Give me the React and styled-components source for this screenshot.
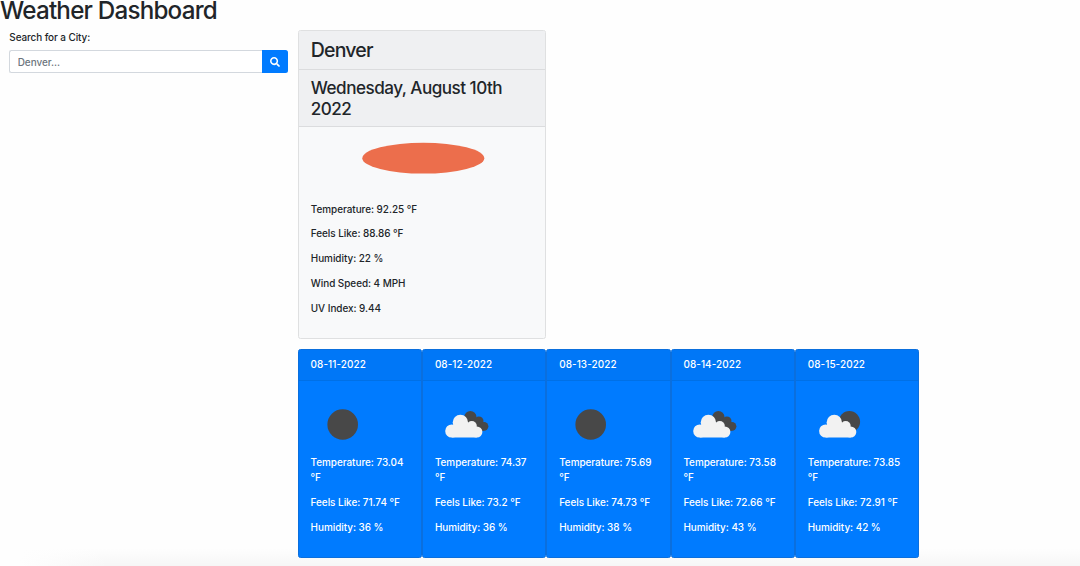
import React from "react";
import styled, { createGlobalStyle } from "styled-components";

const GlobalStyle = createGlobalStyle`
  *, *::before, *::after { box-sizing: border-box; }
  body {
    margin: 0;
    background: #fefefe;
    color: #212529;
    font-family: Inter, "Liberation Sans", sans-serif;
    font-size: 9.94px;
    font-weight: 450;
    line-height: 14.91px;
    overflow: hidden;
  }
`;

const Page = styled.div`
  position: relative;
  height: 566px;
`;

const Title = styled.h1`
  margin: 0;
  height: 29.8px;
  font-size: 24.2px;
  line-height: 21px;
  font-weight: 540;
  letter-spacing: -0.78px;
  white-space: nowrap;
`;

const Columns = styled.div`
  display: flex;
  align-items: flex-start;
`;

const SearchColumn = styled.form`
  width: 297.8px;
  padding: 0 9.7px 0 9.3px;
`;

const SearchLabel = styled.label`
  display: block;
  height: 20px;
  letter-spacing: -0.08px;
`;

const SearchGroup = styled.div`
  display: flex;
  height: 23.7px;
`;

const SearchInput = styled.input`
  flex: 1;
  min-width: 0;
  padding: 1px 7.4px 0;
  border: 1px solid #d3d8de;
  border-right: 0;
  border-radius: 2.5px 0 0 2.5px;
  background: #fff;
  font: inherit;
  outline: none;
  &::placeholder { color: #6c757d; opacity: 1; }
`;

const SearchButton = styled.button`
  display: flex;
  align-items: center;
  justify-content: center;
  width: 26.4px;
  padding: 0;
  border: 0;
  border-radius: 0 2.5px 2.5px 0;
  background: #007bff;
  color: #fff;
`;

const Results = styled.main`
  width: 621.4px;
`;

const CurrentCard = styled.section`
  width: 248.6px;
  height: 309.3px;
  margin-bottom: 9.9px;
  border: 1px solid #dfe0e1;
  border-radius: 2.5px;
  background: #f8f9fa;
  overflow: hidden;
`;

const CurrentHeader = styled.header`
  height: ${(p) => p.$height}px;
  padding: 8.2px 12px 0;
  border-bottom: 1px solid #dbdcde;
  background: #eff0f2;
`;

const City = styled.h2`
  margin: 0;
  font-size: 19.5px;
  line-height: 23.9px;
  font-weight: 540;
  letter-spacing: -0.82px;
`;

const Today = styled.h3`
  margin: 0;
  font-size: 17.1px;
  line-height: 20.9px;
  font-weight: 540;
  letter-spacing: -0.51px;
`;

const CurrentBody = styled.div`
  padding: 0 12px;
`;

const SunIcon = styled.svg`
  display: block;
  width: 224px;
  height: 74.4px;
`;

const Reading = styled.p`
  margin: 0 0 9.94px;
  letter-spacing: -0.03px;
`;

const Forecast = styled.div`
  display: flex;
`;

const DayCard = styled.article`
  flex: 1;
  height: 209px;
  border: 1px solid #0b6fdd;
  border-radius: 2.5px;
  background: #007bff;
  color: #fff;
  overflow: hidden;
`;

const DayHeader = styled.header`
  height: 31px;
  padding: 7.4px 11.8px;
  border-bottom: 1px solid #0070e6;
  background: #0077f7;
  letter-spacing: 0.08px;
`;

const DayBody = styled.div`
  padding: 12.4px 11.8px;
`;

const DayIcon = styled.svg`
  display: block;
  width: 63px;
  height: 62px;
`;

const PageShade = styled.div`
  position: absolute;
  inset: auto 0 0 0;
  height: 18px;
  background: linear-gradient(to right, #fefefe 20px, transparent 110px),
    linear-gradient(to bottom, transparent, rgba(0, 0, 0, 0.03));
  z-index: -1;
`;

function Cloud({ x = 0 }) {
  return (
    <g fill="#f2f2f2" transform={`translate(${x} 0)`}>
      <circle cx="25.4" cy="29.4" r="7.7" />
      <circle cx="16.8" cy="38" r="6.6" />
      <circle cx="36.8" cy="33" r="5" />
      <circle cx="41.8" cy="39" r="5.6" />
      <path d="M16.800 44.6V36L24 30H37L41.800 36V44.6Z" />
    </g>
  );
}

function Weather({ kind }) {
  return (
    <DayIcon viewBox="0 0 63 62" aria-hidden="true">
      {kind === "clear" && <circle cx="31.7" cy="31.5" r="15.3" fill="#484848" />}
      {kind === "broken" && (
        <>
          <g fill="#484848">
            <circle cx="35.4" cy="24.1" r="6.1" />
            <circle cx="43.9" cy="28" r="4.6" />
            <circle cx="49" cy="33.3" r="4.4" />
            <path d="M34 24L44 29L49 37.700H42Z" />
          </g>
          <Cloud />
        </>
      )}
      {kind === "few" && (
        <>
          <circle cx="41.4" cy="28.8" r="10.7" fill="#484848" />
          <Cloud x={0.9} />
        </>
      )}
    </DayIcon>
  );
}

const days = [
  { date: "08-11-2022", kind: "clear", temp: "73.04", feels: "71.74", humidity: 36 },
  { date: "08-12-2022", kind: "broken", temp: "74.37", feels: "73.2", humidity: 36 },
  { date: "08-13-2022", kind: "clear", temp: "75.69", feels: "74.73", humidity: 38 },
  { date: "08-14-2022", kind: "broken", temp: "73.58", feels: "72.66", humidity: 43 },
  { date: "08-15-2022", kind: "few", temp: "73.85", feels: "72.91", humidity: 42 },
];

export default function App() {
  return (
    <Page>
      <GlobalStyle />
      <Title>Weather Dashboard</Title>
      <Columns>
        <SearchColumn>
          <SearchLabel htmlFor="city">Search for a City:</SearchLabel>
          <SearchGroup>
            <SearchInput id="city" placeholder="Denver..." />
            <SearchButton type="button" aria-label="Search">
              <svg width="10" height="10" viewBox="0 0 512 512" fill="currentColor">
                <path d="M505 442.7L405.3 343c-4.5-4.500-10.600-7-17-7H372c27.600-35.300 44-79.700 44-128C416 93.100 322.900 0 208 0S0 93.100 0 208s93.100 208 208 208c48.300 0 92.700-16.400 128-44v16.300c0 6.400 2.500 12.500 7 17l99.700 99.700c9.400 9.400 24.600 9.400 33.900 0l28.300-28.300c9.400-9.400 9.400-24.600.1-34zM208 336c-70.700 0-128-57.200-128-128 0-70.700 57.200-128 128-128 70.700 0 128 57.200 128 128 0 70.700-57.200 128-128 128z" />
              </svg>
            </SearchButton>
          </SearchGroup>
        </SearchColumn>
        <Results>
          <CurrentCard>
            <CurrentHeader $height={39}>
              <City>Denver</City>
            </CurrentHeader>
            <CurrentHeader $height={57.4}>
              <Today>Wednesday, August 10th 2022</Today>
            </CurrentHeader>
            <CurrentBody>
              <SunIcon viewBox="0 0 224 74.4" aria-hidden="true">
                <ellipse cx="112.3" cy="31.200" rx="61" ry="15.4" fill="#ec6e4c" />
              </SunIcon>
              <Reading>Temperature: 92.25 °F</Reading>
              <Reading>Feels Like: 88.86 °F</Reading>
              <Reading>Humidity: 22 %</Reading>
              <Reading>Wind Speed: 4 MPH</Reading>
              <Reading>UV Index: 9.44</Reading>
            </CurrentBody>
          </CurrentCard>
          <Forecast>
            {days.map((day) => (
              <DayCard key={day.date}>
                <DayHeader>{day.date}</DayHeader>
                <DayBody>
                  <Weather kind={day.kind} />
                  <Reading>Temperature: {day.temp} °F</Reading>
                  <Reading>Feels Like: {day.feels} °F</Reading>
                  <Reading>Humidity: {day.humidity} %</Reading>
                </DayBody>
              </DayCard>
            ))}
          </Forecast>
        </Results>
      </Columns>
      <PageShade />
    </Page>
  );
}
